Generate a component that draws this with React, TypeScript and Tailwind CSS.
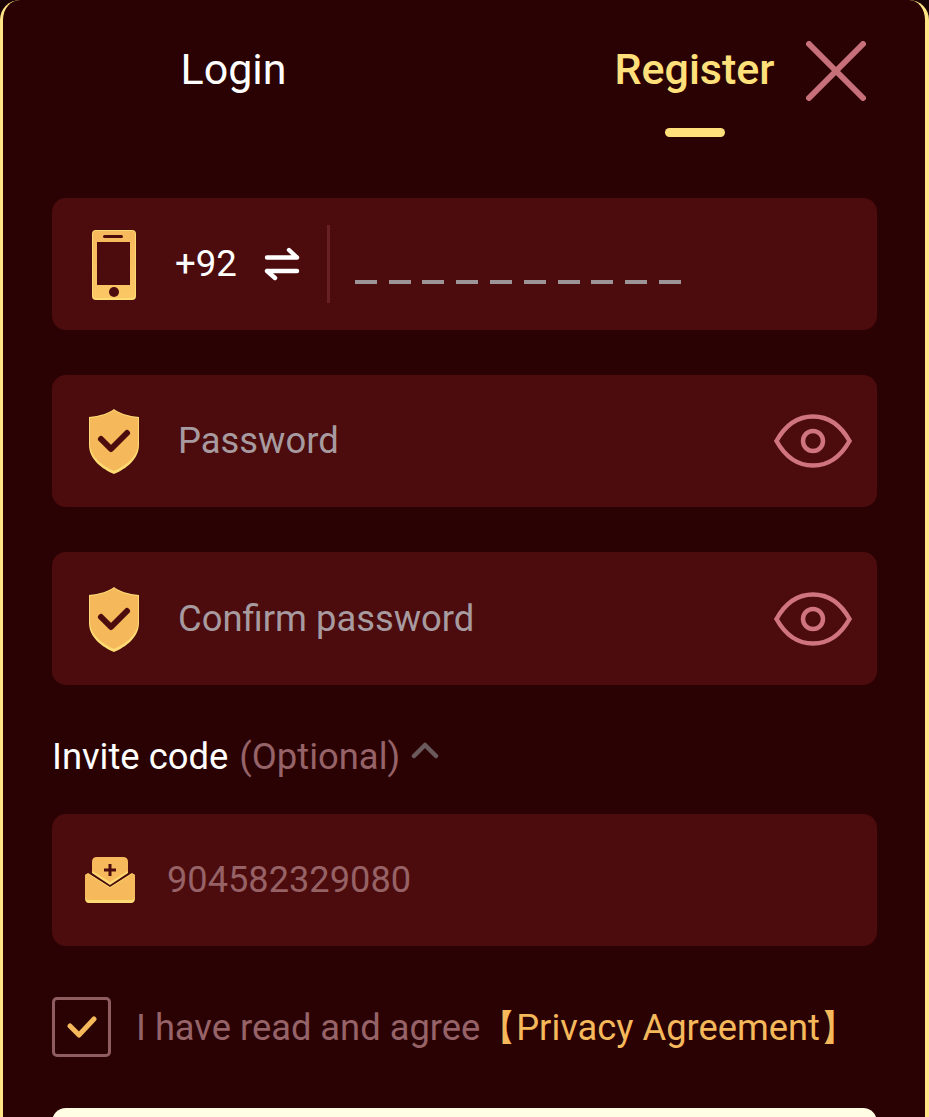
const ROBOTO = "font-['Roboto',sans-serif]";

function PhoneIcon() {
  return (
    <svg width="46" height="72" viewBox="0 0 46 72" className="mt-[2px] shrink-0">
      <defs>
        <linearGradient id="phoneGold" x1="0" y1="0" x2="0" y2="1">
          <stop offset="0" stopColor="#f6b95c" />
          <stop offset="1" stopColor="#fbc765" />
        </linearGradient>
      </defs>
      <rect x="1" y="1" width="44" height="70" rx="4" fill="#ffdc73" />
      <rect x="2" y="2" width="42" height="67" rx="3" fill="url(#phoneGold)" />
      <rect x="12" y="6" width="20" height="3" rx="1.5" fill="#4c0c0e" />
      <rect x="6" y="13" width="33" height="43" fill="#4c0c0e" />
      <circle cx="23" cy="63" r="5" fill="#4c0c0e" />
    </svg>
  );
}

function ShieldIcon() {
  return (
    <svg width="52" height="66" viewBox="0 0 52 66" className="mt-[2px] shrink-0">
      <path d="M26 0 C31 4 40 7 51 8 V36 C51 50 38 60 26 65 C14 60 1 50 1 36 V8 C12 7 21 4 26 0Z" fill="#ffdc73" />
      <path d="M26 1 C31 5 40 8 50 9 V35 C50 48 37 57 26 62 C15 57 2 48 2 35 V9 C12 8 21 5 26 1Z" fill="#f5b85b" />
      <path d="M13 30 L23 40 L39 24" fill="none" stroke="#4c0c0e" strokeWidth="6" strokeLinecap="round" strokeLinejoin="round" />
    </svg>
  );
}

function InviteIcon() {
  return (
    <svg width="52" height="46" viewBox="0 0 52 46" className="shrink-0">
      <path d="M8 5 Q8 0 13 0 H39 Q44 0 44 5 V15 L26 26 L8 15Z" fill="#f6b95c" />
      <path d="M8 14 L26 25 L44 14 V16 L26 28 L8 16Z" fill="#ffdc73" />
      <path d="M26 7 V19 M20 13 H32" stroke="#4c0c0e" strokeWidth="3" />
      <path d="M1 18 L4 16 L26 30 L48 16 L51 18 V41 Q51 46 47 46 H5 Q1 46 1 41Z" fill="#ffdc73" />
      <path d="M1 18 L4 17 L26 31 L48 17 L51 18 V39 Q51 43 47 43 H5 Q1 43 1 39Z" fill="#f6b95c" />
    </svg>
  );
}

function EyeIcon() {
  return (
    <svg width="78" height="54" viewBox="0 0 78 54" className="shrink-0" fill="none" stroke="#d0757f" strokeWidth="4.5">
      <path d="M2.5 27 C12 10 25 2.5 39 2.5 C53 2.5 66 10 75.5 27 C66 44 53 51.5 39 51.5 C25 51.5 12 44 2.5 27Z" />
      <circle cx="39" cy="27" r="10" />
    </svg>
  );
}

function Field({ children, className = "" }: { children: React.ReactNode; className?: string }) {
  return (
    <div className={`ml-[49px] mr-[48px] flex items-center rounded-[14px] bg-[#4c0c0e] ${className}`}>
      {children}
    </div>
  );
}

export default function App() {
  return (
    <div className={`h-[1117px] w-[929px] overflow-hidden bg-[#1a0305] ${ROBOTO}`}>
      <div className="relative h-[1140px] rounded-t-[20px] border-l-[3px] border-r-[4px] border-[#ffe585] bg-[#2a0204]">
        {/* Tabs */}
        <div className="grid grid-cols-2">
          <button className="flex h-[138px] flex-col items-center pt-[42px] text-[43px] leading-[55px] text-white">
            Login
          </button>
          <button className="flex h-[138px] flex-col items-center pt-[42px] text-[43px] font-medium leading-[55px] text-[#ffe07a]">
            Register
            <span className="mt-[31px] h-[9px] w-[60px] rounded-full bg-[#ffe07a]" />
          </button>
        </div>
        <svg width="60" height="60" viewBox="0 0 60 60" className="absolute left-[803px] top-[41px]" stroke="#c8707a" strokeWidth="6" strokeLinecap="round">
          <path d="M3 3 L57 57 M57 3 L3 57" />
        </svg>

        {/* Phone */}
        <Field className="mt-[60px] h-[132px] pl-[39px]">
          <PhoneIcon />
          <span className="ml-[38px] text-[36.6px] leading-none text-white">+92</span>
          <svg width="36" height="36" viewBox="0 0 36 36" className="ml-[27px]" fill="none" stroke="#fff" strokeWidth="4.4" strokeLinecap="round" strokeLinejoin="round">
            <path d="M3 11.5 H33 M25 4 L33 11.5 M33 25 H3 M11 32 L3 25" />
          </svg>
          <span className="ml-[27px] h-[78px] w-[3px] bg-[#672025]" />
          <span className="ml-[25px] mt-[35px] flex gap-[11.8px]">
            {Array.from({ length: 10 }).map((_, i) => (
              <span key={i} className="h-[4px] w-[22px] bg-[#9c9496]" />
            ))}
          </span>
        </Field>

        {/* Password */}
        <Field className="mt-[45px] h-[132px] pl-[36px] pr-[25px]">
          <ShieldIcon />
          <span className="ml-[38px] flex-1 text-[36.4px] leading-none text-[#a79ba0]">Password</span>
          <EyeIcon />
        </Field>

        {/* Confirm password */}
        <Field className="mt-[45px] h-[133px] pl-[36px] pr-[25px]">
          <ShieldIcon />
          <span className="ml-[38px] mt-[2px] flex-1 text-[36.4px] leading-none text-[#a79ba0]">Confirm password</span>
          <EyeIcon />
        </Field>

        {/* Invite code */}
        <div className="ml-[49px] mr-[48px] mt-[48px] flex h-[48px] items-center text-[36.4px] leading-none">
          <span className="text-white">Invite code</span>
          <span className="ml-[11px] text-[#966368]">(Optional)</span>
          <svg width="28" height="18" viewBox="0 0 28 18" className="mb-[14px] ml-[11px]" fill="none" stroke="#6a5a5c" strokeWidth="4.5" strokeLinecap="round" strokeLinejoin="round">
            <path d="M3 15 L14 4 L25 15" />
          </svg>
        </div>

        <Field className="mt-[33px] h-[132px] pl-[32px]">
          <InviteIcon />
          <span className="ml-[31px] text-[36.2px] leading-none text-[#966266]">904582329080</span>
        </Field>

        {/* Agreement */}
        <div className="ml-[49px] mr-[48px] mt-[51px] flex h-[60px] items-center">
          <span className="flex h-[60px] w-[59px] shrink-0 items-center justify-center rounded-[5px] border-[3px] border-[#8f5c60]">
            <svg width="30" height="24" viewBox="0 0 30 24" fill="none" stroke="#f5b85b" strokeWidth="5" strokeLinecap="round" strokeLinejoin="round">
              <path d="M3 11 L12 20 L27 4" />
            </svg>
          </span>
          <span className="ml-[25px] mt-[2px] whitespace-nowrap text-[36.3px] leading-none text-[#966368]">I have read and agree</span>
          <span className="mt-[2px] whitespace-nowrap text-[36.3px] leading-none text-[#f5b85b]">
            【Privacy Agreement】
          </span>
        </div>

        {/* Submit */}
        <div className="ml-[49px] mr-[48px] mt-[51px] h-[80px] rounded-[14px] bg-[#fffde3]" />
      </div>
    </div>
  );
}
